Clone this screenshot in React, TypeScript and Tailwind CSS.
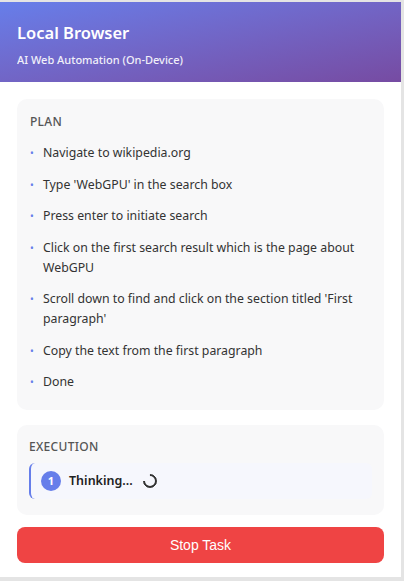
const plan = [
  'Navigate to wikipedia.org',
  "Type 'WebGPU' in the search box",
  'Press enter to initiate search',
  'Click on the first search result which is the page about WebGPU',
  "Scroll down to find and click on the section titled 'First paragraph'",
  'Copy the text from the first paragraph',
  'Done',
]

export default function App() {
  return (
    <div className="w-[404px] h-[581px] bg-[#e4e4e4] pt-[2px] font-['Noto_Sans',sans-serif] overflow-hidden">
      <div className="w-[401px] h-[575px] bg-white flex flex-col">
        {/* header */}
        <div className="h-[80px] px-[17px] pt-[19px] flex flex-col bg-gradient-to-br from-[#667eea] to-[#764ba2] text-white">
          <h1 className="text-[16.5px] font-semibold leading-[24px]">Local Browser</h1>
          <p className="text-[11px] font-medium leading-[16px] opacity-90 mt-[7px]">AI Web Automation (On-Device)</p>
        </div>

        <div className="px-[17px] pt-[17px] flex flex-col">
          {/* plan */}
          <div className="bg-[#f8f8f9] rounded-[10px] px-[13px] pt-[14px] pb-[18px]">
            <div className="text-[12px] font-medium text-[#555] tracking-wide uppercase">Plan</div>
            <ul className="mt-[12px] flex flex-col gap-[11.5px]">
              {plan.map(step => (
                <li key={step} className="flex text-[12.3px] leading-[20px] text-[#333]">
                  <span className="w-[13px] shrink-0 text-[#667eea] text-[10px]">•</span>
                  <span>{step}</span>
                </li>
              ))}
            </ul>
          </div>

          {/* execution */}
          <div className="mt-[15px] bg-[#f8f8f9] rounded-[10px] px-[12px] pt-[13px] pb-[16px]">
            <div className="text-[12px] font-medium text-[#555] tracking-wide uppercase">Execution</div>
            <div className="mt-[7px] h-[36px] flex items-center gap-[8px] pl-[10px] bg-[#f6f7fd] border-l-[2px] border-[#667eea] rounded-[6px]">
              <div className="w-[20px] h-[20px] rounded-full bg-[#667eea] text-white text-[11px] font-bold flex items-center justify-center">1</div>
              <span className="text-[12.5px] font-semibold text-[#222]">Thinking...</span>
              <div className="ml-[2px] w-[14px] h-[14px] rounded-full border-2 border-[#333] border-t-transparent -rotate-45" />
            </div>
          </div>

          {/* stop */}
          <button className="mt-[12px] h-[36px] w-full rounded-[8px] bg-[#ef4444] text-white text-[14px] font-['Liberation_Sans',sans-serif]">
            Stop Task
          </button>
        </div>
      </div>
    </div>
  )
}
